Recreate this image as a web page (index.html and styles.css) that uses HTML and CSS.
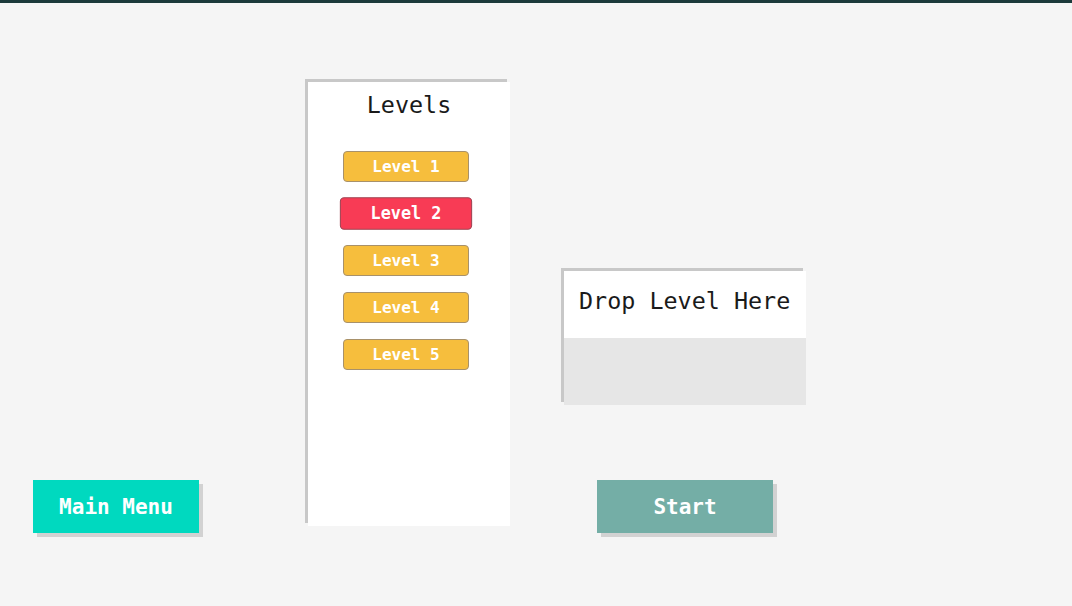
FILE: index.html
```html
<!DOCTYPE html>
<html lang="en">
<head>
<meta charset="utf-8">
<title>Levels</title>
<link rel="stylesheet" href="styles.css">
</head>
<body>
<div class="topbar"></div>
<main class="stage">
  <div class="left-col">
    <button class="btn btn-menu">Main Menu</button>
  </div>
  <section class="levels-panel">
    <h2 class="panel-title">Levels</h2>
    <div class="level-list">
      <button class="level">Level 1</button>
      <button class="level level-active">Level 2</button>
      <button class="level">Level 3</button>
      <button class="level">Level 4</button>
      <button class="level">Level 5</button>
    </div>
  </section>
  <div class="right-col">
    <section class="dropzone">
      <div class="dropzone-head">Drop Level Here</div>
      <div class="dropzone-body"></div>
    </section>
    <button class="btn btn-start">Start</button>
  </div>
</main>
</body>
</html>
```
FILE: styles.css
```css
* { box-sizing: border-box; }
html, body { margin: 0; padding: 0; }
body {
  background: #f5f5f5;
  font-family: "DejaVu Sans Mono", "Liberation Mono", monospace;
  color: #1a1a1a;
  width: 1072px;
  height: 606px;
  overflow: hidden;
}
.topbar {
  height: 3px;
  background: #1c3a3b;
}
.stage {
  display: flex;
  align-items: flex-start;
  height: 603px;
  padding-left: 33px;
}
.left-col {
  width: 166px;
  height: 100%;
  display: flex;
  flex-direction: column;
  justify-content: flex-end;
  padding-bottom: 73px;
}
.btn {
  border: none;
  font-family: inherit;
  font-size: 21px;
  font-weight: bold;
  color: #fff;
  height: 53px;
  box-shadow: 4px 4px 0 #d2d2d2;
  padding: 1px 0 0;
  cursor: pointer;
}
.btn-menu {
  width: 166px;
  background: #00d9bf;
}
.btn-start {
  width: 176px;
  margin-left: 33px;
  margin-top: 75px;
  background: #74aea6;
}
.levels-panel {
  margin-left: 109px;
  margin-top: 79px;
  width: 202px;
  height: 444px;
  background: #fff;
  box-shadow: -3px -3px 0 #c8c8c8;
  display: flex;
  flex-direction: column;
  align-items: center;
}
.panel-title {
  margin: 9px 0 0;
  font-size: 23.4px;
  font-weight: normal;
  line-height: 28px;
}
.level-list {
  margin: 32px 6px 0 0;
  display: flex;
  flex-direction: column;
  align-items: center;
  gap: 16px;
}
.level {
  width: 126px;
  height: 31px;
  border: 1px solid #a8916a;
  border-radius: 4px;
  background: #f6be3d;
  color: #fff;
  font-family: inherit;
  font-size: 16px;
  font-weight: bold;
  padding: 0;
  cursor: pointer;
}
.level-active {
  background: #f83b55;
  border-color: #9e4352;
  transform: scale(1.05);
}
.right-col {
  margin-left: 54px;
  width: 242px;
  display: flex;
  flex-direction: column;
  align-items: flex-start;
}
.dropzone {
  margin-top: 268px;
  width: 242px;
  height: 134px;
  background: #e6e6e6;
  box-shadow: -3px -3px 0 #c8c8c8;
  display: flex;
  flex-direction: column;
}
.dropzone-head {
  height: 67px;
  background: #fff;
  font-size: 23.4px;
  line-height: 28px;
  padding: 16px 0 0 15px;
  white-space: nowrap;
}
.dropzone-body {
  flex: 1;
}
```
